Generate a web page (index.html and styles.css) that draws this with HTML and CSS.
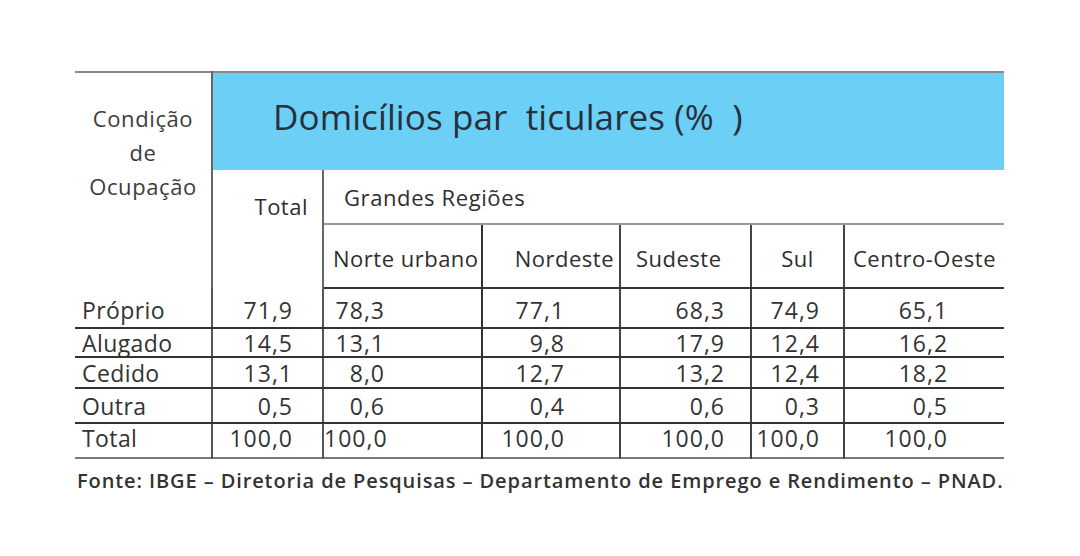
FILE: index.html
```html
<!DOCTYPE html>
<html lang="pt">
<head>
<meta charset="utf-8">
<link rel="stylesheet" href="styles.css">
</head>
<body>
<div class="wrap">
<table class="tbl">
  <colgroup>
    <col class="c0"><col class="c1"><col class="c2"><col class="c3"><col class="c4"><col class="c5"><col class="c6">
  </colgroup>
  <thead>
    <tr class="r-title">
      <th class="cond" rowspan="3">Condição<br>de<br>Ocupação</th>
      <th class="title" colspan="6">Domicílios par&nbsp; ticulares (%&nbsp; )</th>
    </tr>
    <tr class="r-grp">
      <th class="tot" rowspan="2">Total</th>
      <th class="grp" colspan="5">Grandes Regiões</th>
    </tr>
    <tr class="r-reg">
      <th class="reg h-norte">Norte urbano</th>
      <th class="reg h-nordeste">Nordeste</th>
      <th class="reg h-sudeste">Sudeste</th>
      <th class="reg h-sul">Sul</th>
      <th class="reg h-centro">Centro-Oeste</th>
    </tr>
  </thead>
  <tbody>
    <tr class="r1"><td class="lbl">Próprio</td><td class="num v-tot">71,9</td><td class="num v-norte">78,3</td><td class="num v-nordeste">77,1</td><td class="num v-sudeste">68,3</td><td class="num v-sul">74,9</td><td class="num v-centro">65,1</td></tr>
    <tr class="r2"><td class="lbl">Alugado</td><td class="num v-tot">14,5</td><td class="num v-norte">13,1</td><td class="num v-nordeste">9,8</td><td class="num v-sudeste">17,9</td><td class="num v-sul">12,4</td><td class="num v-centro">16,2</td></tr>
    <tr class="r3"><td class="lbl">Cedido</td><td class="num v-tot">13,1</td><td class="num v-norte">8,0</td><td class="num v-nordeste">12,7</td><td class="num v-sudeste">13,2</td><td class="num v-sul">12,4</td><td class="num v-centro">18,2</td></tr>
    <tr class="r4"><td class="lbl">Outra</td><td class="num v-tot">0,5</td><td class="num v-norte">0,6</td><td class="num v-nordeste">0,4</td><td class="num v-sudeste">0,6</td><td class="num v-sul">0,3</td><td class="num v-centro">0,5</td></tr>
    <tr class="r5"><td class="lbl">Total</td><td class="num v-tot">100,0</td><td class="num v-norte">100,0</td><td class="num v-nordeste">100,0</td><td class="num v-sudeste">100,0</td><td class="num v-sul">100,0</td><td class="num v-centro">100,0</td></tr>
  </tbody>
</table>
<p class="fonte">Fonte: IBGE – Diretoria de Pesquisas – Departamento de Emprego e Rendimento – PNAD.</p>
</div>
</body>
</html>
```

FILE: styles.css
```css
html, body {
  margin: 0;
  padding: 0;
  background: #ffffff;
}
body {
  font-family: "Open Sans", "Liberation Sans", sans-serif;
  color: #333333;
}
th, td {
  padding: 0;
  font-weight: 400;
  white-space: nowrap;
}
.wrap {
  padding: 71px 0 0 75px;
  width: 929px;
}
.tbl {
  border-collapse: collapse;
  table-layout: fixed;
  width: 929px;
  border-top: 2px solid #8a8a8a;
  border-bottom: 2px solid #7a7a7a;
}
.c0 { width: 137px; }
.c1 { width: 111px; }
.c2 { width: 159px; }
.c3 { width: 138px; }
.c4 { width: 131px; }
.c5 { width: 93px; }
.c6 { width: 160px; }

.cond {
  vertical-align: top;
  text-align: center;
  font-size: 22px;
  letter-spacing: 0.6px;
  line-height: 34px;
  padding-top: 28px;
  color: #3c3c3c;
  border-right: 2px solid #666;
}
.r-title { height: 98px; }
.title {
  background: #6ccff5;
  text-align: left;
  padding-left: 60px;
  padding-bottom: 10px;
  font-size: 35px;
  letter-spacing: 0.1px;
  color: #27313c;
}
.r-grp { height: 54px; }
.tot {
  vertical-align: top;
  text-align: right;
  padding: 21px 14px 0 0;
  font-size: 22px;
  letter-spacing: 0.5px;
  line-height: 30px;
  color: #2e2e2e;
  border-right: 2px solid #666;
}
.grp {
  text-align: left;
  padding-left: 20px;
  font-size: 22px;
  letter-spacing: 0.6px;
  color: #2e2e2e;
  border-bottom: 2px solid #999;
}
.r-reg { height: 64px; }
.reg {
  font-size: 22px;
  letter-spacing: 0.5px;
  color: #2e2e2e;
  padding-top: 3px;
  border-bottom: 2px solid #333;
}
.h-norte { text-align: left; padding-left: 9px; border-right: 2px solid #333; }
.h-nordeste { text-align: right; padding-right: 5px; border-right: 2px solid #444; }
.h-sudeste { text-align: left; padding-left: 15px; border-right: 2px solid #444; }
.h-sul { text-align: center; border-right: 2px solid #444; }
.h-centro { text-align: left; padding-left: 8px; }

.lbl, .num {
  font-size: 23px;
  line-height: 24px;
  color: #333;
  border-bottom: 2px solid #333;
}
.lbl {
  text-align: left;
  padding-left: 7px;
  letter-spacing: 0.4px;
  border-right: 2px solid #555;
}
.num {
  text-align: right;
  letter-spacing: 1px;
}
.r5 .lbl, .r5 .num { border-bottom: 0; padding-bottom: 6px; }
.r1 { height: 40px; }
.r2 { height: 29px; }
.r3 { height: 31px; }
.r4 { height: 35px; }
.r5 { height: 35px; }
.r1 .lbl, .r1 .num { padding-top: 4px; }
.v-tot { padding-right: 29px; border-right: 2px solid #555; }
.v-norte { padding-right: 96px; border-right: 2px solid #333; }
.v-nordeste { padding-right: 54px; border-right: 2px solid #444; }
.v-sudeste { padding-right: 25px; border-right: 2px solid #444; }
.v-sul { padding-right: 23px; border-right: 2px solid #444; }
.v-centro { padding-right: 56px; }

.fonte {
  margin: 8px 0 0 2px;
  font-size: 20px;
  font-weight: 600;
  letter-spacing: 0.9px;
  color: #333;
  white-space: nowrap;
}
```
